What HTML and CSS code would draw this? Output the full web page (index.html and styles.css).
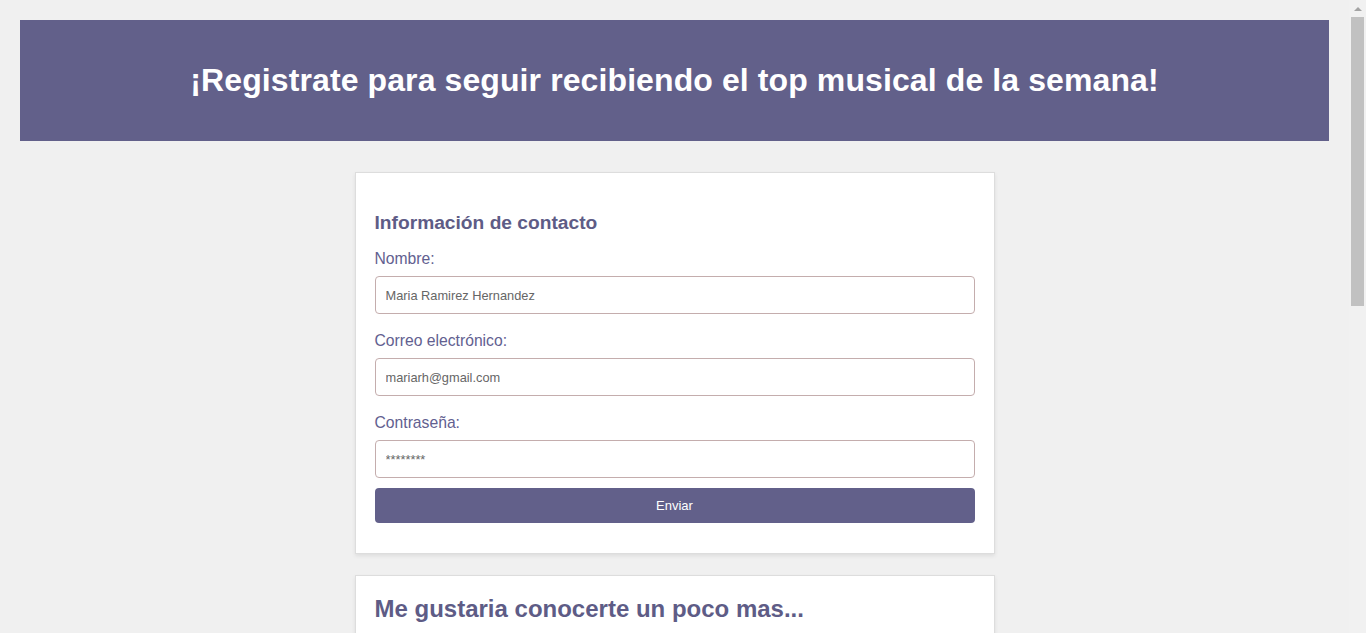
FILE: index.html
```html
<!DOCTYPE html>
<html lang="es">
<head>
<meta charset="utf-8">
<title>Registro</title>
<link rel="stylesheet" href="styles.css">
</head>
<body>
<header class="banner">
  <h1 class="banner-title">¡Registrate para seguir recibiendo el top musical de la semana!</h1>
</header>
<main class="content">
  <section class="card">
    <h2 class="card-title">Información de contacto</h2>
    <form class="form">
      <label class="field-label" for="nombre">Nombre:</label>
      <input class="field-input" id="nombre" type="text" value="Maria Ramirez Hernandez">
      <label class="field-label" for="correo">Correo electrónico:</label>
      <input class="field-input" id="correo" type="email" value="mariarh@gmail.com">
      <label class="field-label" for="pass">Contraseña:</label>
      <input class="field-input field-last" id="pass" type="text" value="********">
      <button class="submit" type="button">Enviar</button>
    </form>
  </section>
  <section class="card card-second">
    <h2 class="card-title card-title-lg">Me gustaria conocerte un poco mas...</h2>
    <form class="form">
      <label class="field-label" for="edad">Edad:</label>
      <input class="field-input" id="edad" type="text" value="">
      <label class="field-label" for="genero">Género musical favorito:</label>
      <input class="field-input" id="genero" type="text" value="">
      <label class="field-label" for="artista">Artista favorito:</label>
      <input class="field-input field-last" id="artista" type="text" value="">
      <button class="submit" type="button">Enviar</button>
    </form>
  </section>
</main>
<div class="scrollbar" aria-hidden="true">
  <div class="scroll-arrow"></div>
  <div class="scroll-thumb"></div>
</div>
</body>
</html>
```
FILE: styles.css
```css
html, body {
  margin: 0;
  padding: 0;
}
body {
  background: #f0f0f0;
  font-family: "Liberation Sans", Arial, sans-serif;
  padding: 20px 37px 20px 20px;
}
.banner {
  background: #62608a;
  height: 121px;
  display: flex;
  align-items: center;
  justify-content: center;
}
.banner-title {
  margin: 0;
  color: #ffffff;
  font-size: 32px;
  font-weight: bold;
  letter-spacing: 0.1px;
}
.content {
  display: flex;
  flex-direction: column;
  align-items: center;
  gap: 21px;
  padding-top: 31px;
}
.card {
  box-sizing: border-box;
  width: 640px;
  background: #ffffff;
  border: 1px solid #dddddd;
  box-shadow: 0 2px 4px rgba(0,0,0,0.08);
  padding: 39px 19px 30px;
}
.card-second {
  padding-top: 19px;
}
.card-title {
  margin: 0 0 16px;
  color: #5e5c86;
  font-size: 19.2px;
  font-weight: bold;
}
.card-title-lg {
  font-size: 24px;
}
.form {
  display: flex;
  flex-direction: column;
}
.field-label {
  color: #626090;
  font-size: 15.7px;
  line-height: 18px;
  margin-bottom: 8px;
}
.field-input {
  box-sizing: border-box;
  height: 38px;
  border: 1px solid #c4adad;
  border-radius: 4px;
  padding: 0 10px;
  font-family: "Liberation Sans", Arial, sans-serif;
  font-size: 12.8px;
  color: #666666;
  margin: 0 0 18px;
  outline: none;
}
.field-last {
  margin-bottom: 10px;
}
.submit {
  height: 35px;
  border: none;
  border-radius: 4px;
  background: #62608a;
  color: #ffffff;
  font-family: "Liberation Sans", Arial, sans-serif;
  font-size: 13px;
}
.scrollbar {
  position: fixed;
  top: 0;
  right: 0;
  width: 17px;
  height: 100%;
  background: #f1f1f1;
}
.scroll-arrow {
  width: 0;
  height: 0;
  margin: 7px auto 0;
  border-left: 4px solid transparent;
  border-right: 4px solid transparent;
  border-bottom: 4px solid #a3a3a3;
}
.scroll-thumb {
  margin: 6px 2px 0 2px;
  height: 289px;
  background: #c1c1c1;
}
```
